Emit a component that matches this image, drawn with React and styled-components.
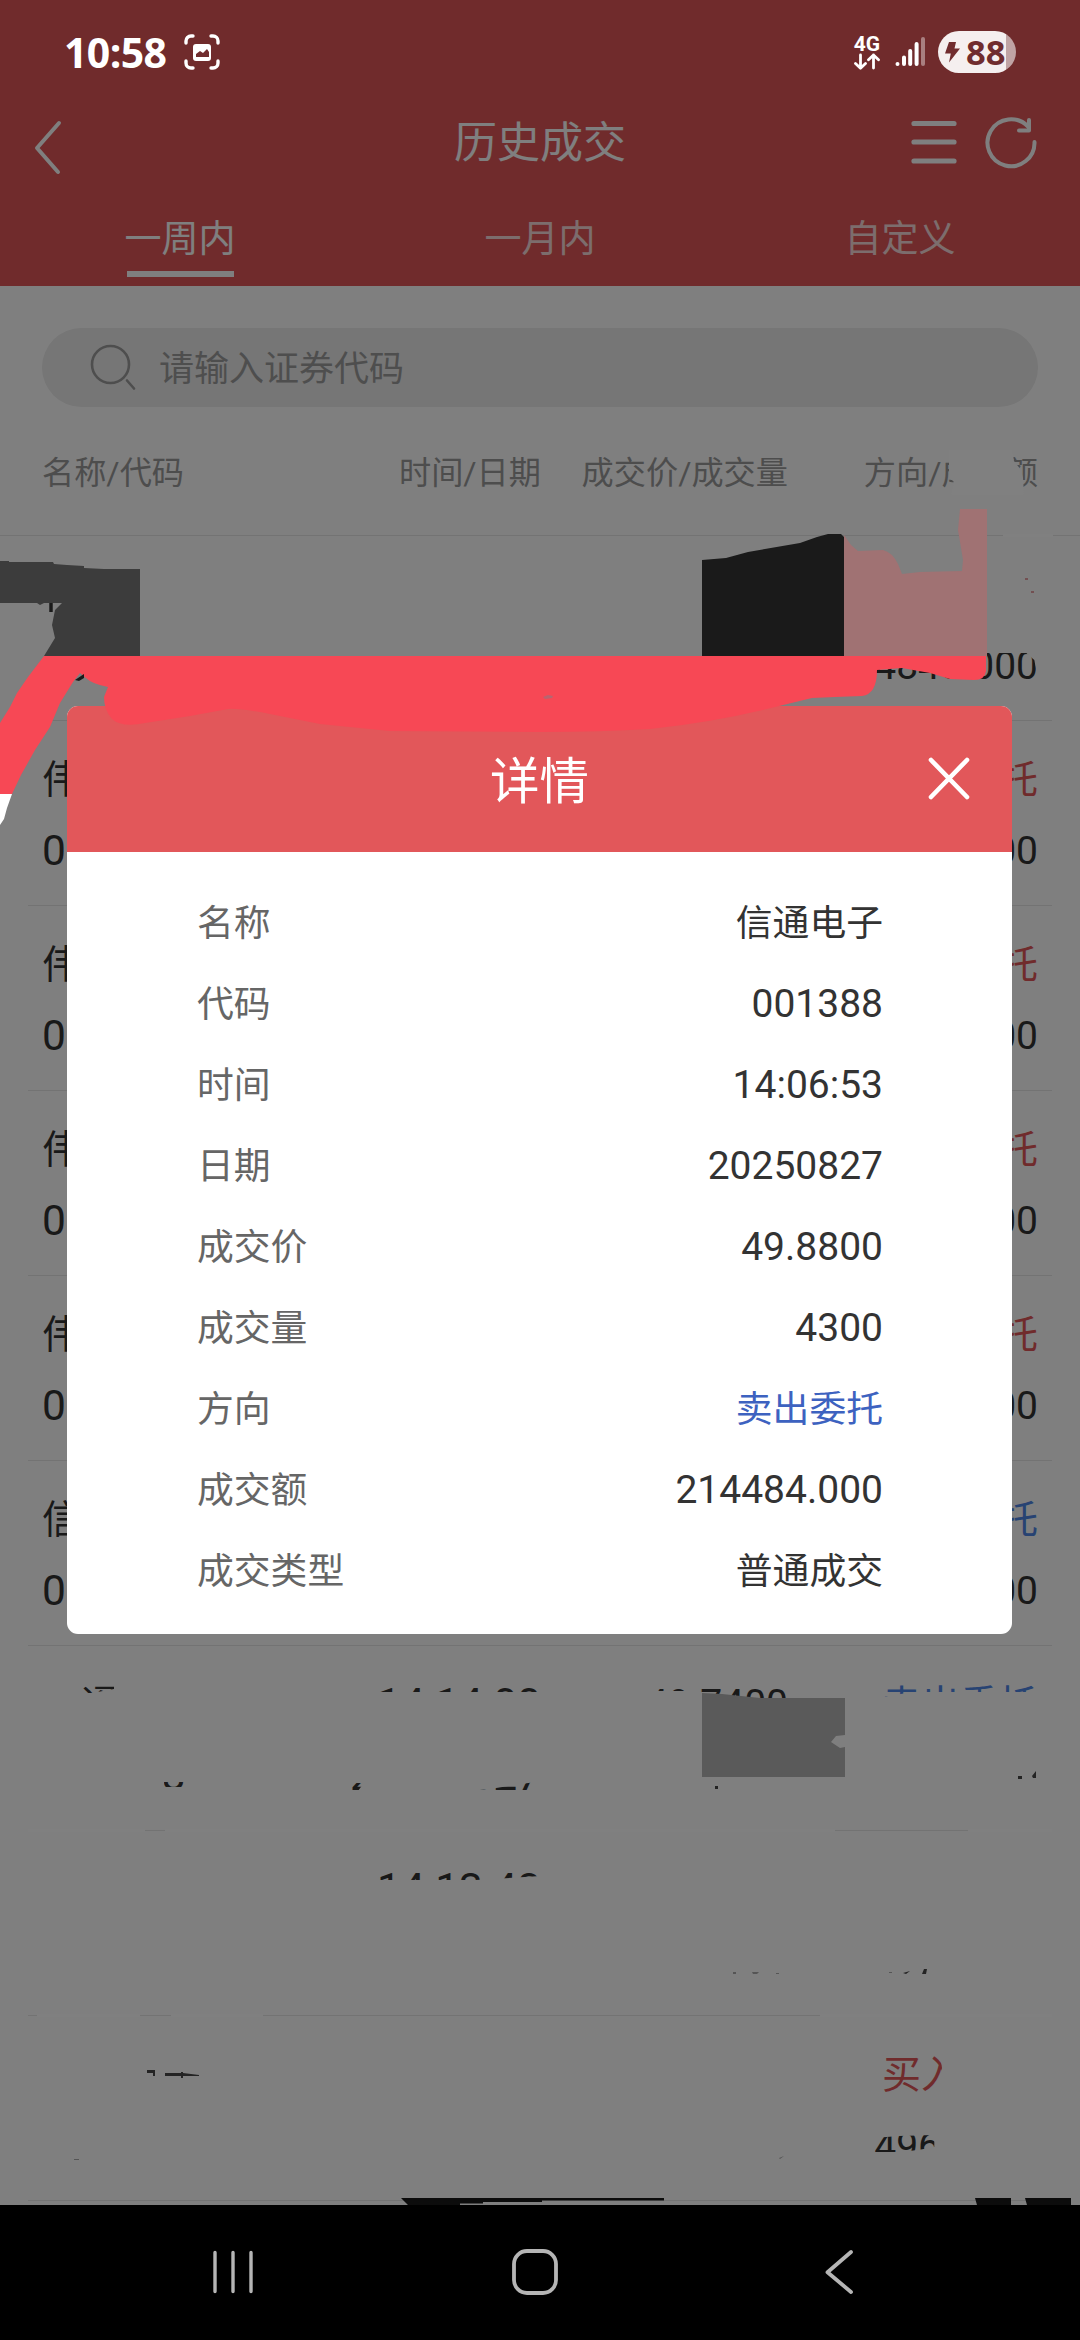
import React from 'react';
import styled, { createGlobalStyle } from 'styled-components';

const GlobalStyle = createGlobalStyle`
  * {
    box-sizing: border-box;
  }

  body {
    margin: 0;
    background: #000000;
    font-family: Roboto, "Noto Sans CJK SC", sans-serif;
  }
`;

const Screen = styled.div`
  position: relative;
  width: 1080px;
  height: 2340px;
  display: flex;
  flex-direction: column;
  overflow: hidden;
`;

const Page = styled.main`
  position: relative;
  height: 2205px;
  background: #FFFFFF;
  overflow: hidden;
`;

const Header = styled.header`
  height: 286px;
  padding-top: 96px;
  background: #E15759;
  color: #FFFFFF;
`;

const TitleBar = styled.div`
  display: grid;
  grid-template-columns: 240px 1fr 240px;
  align-items: center;
  height: 94px;
  padding: 0 34px;

  h1 {
    margin: 0;
    text-align: center;
    font-size: 43px;
    font-weight: 400;
    line-height: 60px;
  }
`;

const BarIcon = styled.svg`
  display: block;
  fill: none;
  stroke: currentColor;
  stroke-linecap: round;
  stroke-linejoin: round;
`;

const BackIcon = styled(BarIcon)`
  margin-top: 8px;
`;

const Actions = styled.div`
  display: flex;
  justify-content: flex-end;
  align-items: center;
  gap: 28px;
  padding-right: 9px;
`;

const Tabs = styled.nav`
  display: grid;
  grid-template-columns: repeat(3, 1fr);
  height: 96px;
`;

const Tab = styled.div`
  display: flex;
  flex-direction: column;
  align-items: center;
  color: ${({ $active }) => ($active ? '#FFFFFF' : 'rgba(255, 255, 255, 0.8)')};
  font-size: 37px;
  line-height: 52px;
  padding-top: 24px;

  &::after {
    content: '';
    width: 107px;
    height: 6px;
    margin-top: 5px;
    background: ${({ $active }) => ($active ? '#FFFFFF' : 'transparent')};
  }
`;

const SearchBox = styled.div`
  display: flex;
  align-items: center;
  height: 79px;
  margin: 42px 42px 0;
  padding-left: 48px;
  gap: 23px;
  border-radius: 40px;
  background: #ECECEC;
  color: #9C9C9C;
  font-size: 35px;
  line-height: 50px;

  span {
    padding-top: 4px;
  }
`;

const Columns = styled.div`
  display: grid;
  grid-template-columns: 250px 249px 247px 250px;
`;

const TableHead = styled(Columns)`
  height: 129px;
  padding: 0 42px;
  border-bottom: 1px solid #E6E6E6;
  color: #9A9A9A;
  font-size: 32.2px;
  line-height: 133px;
  white-space: nowrap;

  span + span {
    text-align: right;
  }
`;

const Row = styled(Columns)`
  height: 185px;
  margin: 0 28px;
  padding: 22px 14px 0;
  border-bottom: 1px solid #E6E6E6;
`;

const Cell = styled.div`
  display: flex;
  flex-direction: column;
  align-items: ${({ $left }) => ($left ? 'flex-start' : 'flex-end')};
  color: #333333;
  font-size: ${({ $big }) => ($big ? 42.5 : 39)}px;
  white-space: nowrap;
`;

const Line = styled.span`
  height: 72px;
  line-height: 72px;
  clip-path: ${({ $clip }) => $clip || 'none'};
`;

const NameLine = styled(Line)`
  line-height: 74px;
  font-size: 39px;
  color: ${({ $tone }) => ({ buy: '#E15759', sell: '#4F86E6' }[$tone] || 'inherit')};
`;

const Shade = styled.div`
  position: absolute;
  inset: 0;
  background: rgba(0, 0, 0, 0.5);
`;

const StatusBar = styled.div`
  position: absolute;
  top: 0;
  left: 0;
  right: 0;
  height: 96px;
  display: flex;
  align-items: center;
  padding: 8px 64px 0 64px;
  color: #FFFFFF;
`;

const Clock = styled.span`
  font: 700 41px/50px "Open Sans", sans-serif;
  letter-spacing: -0.6px;
  width: 120px;
`;

const StatusRight = styled.div`
  display: flex;
  align-items: center;
  margin-left: auto;
`;

const Network = styled.div`
  display: flex;
  flex-direction: column;
  align-items: center;
  width: 26px;
  margin-right: 15px;
  font: 700 21px/18px Roboto, sans-serif;
`;

const Battery = styled.div`
  display: flex;
  align-items: center;
  width: 78px;
  height: 42px;
  margin-left: 13px;
  padding-left: 7px;
  gap: 6px;
  border-radius: 21px;
  background: linear-gradient(to right, #F5EFEF 68px, #C0A3A4 68px);
  color: #702C2E;
  font: 700 34.5px/42px "Open Sans", sans-serif;
`;

const Modal = styled.section`
  position: absolute;
  top: 706px;
  left: 67px;
  width: 945px;
  height: 928px;
  border-radius: 11px;
  background: #FFFFFF;
  overflow: hidden;
`;

const ModalHeader = styled.div`
  display: grid;
  grid-template-columns: 84px 1fr 84px;
  align-items: center;
  height: 146px;
  background: #E2575A;
  color: #FFFFFF;

  h2 {
    margin: 0;
    padding-top: 6px;
    text-align: center;
    font-size: 49.5px;
    font-weight: 400;
    line-height: 70px;
  }
`;

const DetailList = styled.dl`
  margin: 0;
  padding: 31px 129px 0 130px;
`;

const DetailRow = styled.div`
  display: flex;
  justify-content: space-between;
  height: 81px;
  line-height: 81px;
  font-size: 36.8px;

  dt {
    color: #666666;
  }

  dd {
    margin: 0;
    color: ${({ $sell }) => ($sell ? '#3D62C0' : '#333333')};
    font-size: ${({ $number }) => ($number ? 39 : 36.8)}px;
  }
`;

const Scribbles = styled.svg`
  position: absolute;
  top: 0;
  left: 0;
  pointer-events: none;
`;

const NavBar = styled.footer`
  display: flex;
  align-items: center;
  height: 135px;
  padding: 0 0 2px 211px;
  background: #000000;
  color: #B5B5B5;
`;

const NavIcon = styled(BarIcon)`
  margin-right: ${({ $gap }) => $gap || 0}px;
`;

const rows = [
  { amount: '4848.000', amountClip: 'polygon(0 23px, 152px 23px, 160px 30px, 162px 40px, 162px 100%, 0 100%)' },
  { name: '伟', code: '0', side: '委托', tone: 'buy', amount: '000' },
  { name: '伟', code: '0', side: '委托', tone: 'buy', amount: '000' },
  { name: '伟', code: '0', side: '委托', tone: 'buy', amount: '000' },
  { name: '伟', code: '0', side: '委托', tone: 'buy', amount: '000' },
  { name: '信', code: '0', side: '委托', tone: 'sell', amount: '000' },
  {
    name: '信通',
    nameClip: 'polygon(41px 0, 72px 0, 72px 21px, 50px 25px, 41px 25px)',
    code: '001388',
    codeClip: 'polygon(122px 42px, 100% 42px, 100% 47px, 122px 47px)',
    time: '14:14:00',
    timeClip: 'polygon(0 0, 100% 0, 100% 24px, 0 24px)',
    date: '20250827',
    dateClip: 'polygon(0 43px, 14px 43px, 8px 51px, 120px 51px, 140px 49px, 100% 41px, 100% 60px, 0 60px)',
    price: '49.7400',
    priceClip: 'polygon(0 0, 100% 0, 100% 60px, 54px 60px, 54px 23px, 0 23px)',
    side: '卖出委托',
    sideClip: 'polygon(0 0, 100% 0, 100% 24px, 20% 24px, 0 29px)',
    tone: 'sell',
  },
  { time: '14:13:48', timeClip: 'polygon(0 0, 100% 0, 100% 23px, 60% 27px, 0 27px)' },
  {
    side: '买入委托',
    sideClip: 'polygon(0 0, 56px 0, 60px 30px, 56px 50px, 54px 100%, 0 100%)',
    tone: 'buy',
    amount: '4968.000',
    amountClip: 'polygon(0 28px, 24px 26px, 60px 25px, 60px 37px, 44px 40px, 24px 42px, 0 42px)',
  },
];

const details = [
  { label: '名称', value: '信通电子' },
  { label: '代码', value: '001388', number: true },
  { label: '时间', value: '14:06:53', number: true },
  { label: '日期', value: '20250827', number: true },
  { label: '成交价', value: '49.8800', number: true },
  { label: '成交量', value: '4300', number: true },
  { label: '方向', value: '卖出委托', sell: true },
  { label: '成交额', value: '214484.000', number: true },
  { label: '成交类型', value: '普通成交' },
];

const TradeRow = ({ row }) => (
  <Row>
    <Cell $left $big>
      <NameLine $clip={row.nameClip}>{row.name}</NameLine>
      <Line $clip={row.codeClip}>{row.code}</Line>
    </Cell>
    <Cell $big>
      <Line $clip={row.timeClip}>{row.time}</Line>
      <Line $clip={row.dateClip}>{row.date}</Line>
    </Cell>
    <Cell>
      <Line $clip={row.priceClip}>{row.price}</Line>
    </Cell>
    <Cell>
      <NameLine $tone={row.tone} $clip={row.sideClip}>{row.side}</NameLine>
      <Line $clip={row.amountClip}>{row.amount}</Line>
    </Cell>
  </Row>
);

const StatusIcons = () => (
  <StatusBar>
    <Clock>10:58</Clock>
    <BarIcon width="36" height="36" viewBox="0 0 36 36" strokeWidth="3.4">
      <path d="M2 9V7a5 5 0 0 1 5-5h2M27 2h2a5 5 0 0 1 5 5v2M34 27v2a5 5 0 0 1-5 5h-2M9 34H7a5 5 0 0 1-5-5v-2" />
      <rect x="9" y="10" width="18" height="17" rx="3" fill="currentColor" stroke="none" />
      <path d="M12 23v-3l4-3 3 2 4-4 2 3v5z" fill="#702C2E" stroke="none" />
    </BarIcon>
    <StatusRight>
      <Network>
        4G
        <BarIcon width="26" height="17" viewBox="0 0 26 17" strokeWidth="2.8">
          <path d="M6.500 2v13M1.500 10.500l5 4.700 5-4.700M19.500 15V2M14.500 6.700l5-4.700 5 4.700" />
        </BarIcon>
      </Network>
      <BarIcon width="30" height="30" viewBox="0 0 30 30" strokeWidth="4">
        <path d="M2.500 27v.1M9 20.500V27M15.200 14v13M21.600 7v20" />
        <path d="M28 2v25" opacity="0.4" />
      </BarIcon>
      <Battery>
        <svg width="15" height="22" viewBox="0 0 15 22" fill="currentColor">
          <path d="M4 1h7L9.500 7.500H15L4 21.500 5.800 12.500H0z" />
        </svg>
        88
      </Battery>
    </StatusRight>
  </StatusBar>
);

const DetailModal = () => (
  <Modal>
    <ModalHeader>
      <span />
      <h2>详情</h2>
      <BarIcon width="42" height="44" viewBox="0 0 42 44" strokeWidth="4.6">
        <path d="M3 3l36 37M39 3L3 40" />
      </BarIcon>
    </ModalHeader>
    <DetailList>
      {details.map((item) => (
        <DetailRow key={item.label} $sell={item.sell} $number={item.number}>
          <dt>{item.label}</dt>
          <dd>{item.value}</dd>
        </DetailRow>
      ))}
    </DetailList>
  </Modal>
);

// Eraser and marker strokes that lie over the list and the dialog
const Markup = () => (
  <Scribbles width="1080" height="2205" viewBox="0 0 1080 2205">
    <g fill="#808080">
      <path d="M949 450L949 477 954 482 951 495H1024L1023 478 1021 470 1014 461 1012 450Z" />
      <path d="M1003 534h50v3h-50zM28 1829h117v3H28zM165 1829h670v3H165zM968 1829h84v3h-84z" />
      <path d="M37 2014h103v3H37zM171 2014h92v3h-92zM820 2014h232v3H820z" />
    </g>
    <g fill="#242424">
      <path d="M49.500 603h3v9h-3z" />
      <path d="M715 1786h3v3h-3zM1018 1776h4v3h-4zM1032 1776l4-5v7h-3z" />
      <path d="M147 2070h8v6h-2v-3h-6zM165 2073h16v-1h2v1l16 2v1h-16v2h-2v-2h-16z" />
      <path d="M922 1974l2-5h3l-1 5zM903 1973l7-2-4 3z" />
    </g>
    <g fill="#555555">
      <path d="M733 1972h3v2h-3zM752 1972h7l-2 2h-4zM889 1972h3v1h-3zM776 1973h3v1h-3zM779 2158l5-2-4 3zM74 2159h5v1h-5z" />
    </g>
    <path d="M1025 578h3v2h-3zM1031 591h3v2h-3z" fill="#735052" />
    <path d="M0 561h9v1h44l1 2 13 1 17 1v2l20 1h36v87H44l11-18-3-13 3-15 7-7H44l-4 2-3-2H0z" fill="#3C3C3C" />
    <path d="M49.500 603h3v9h-3z" fill="#1A1A1A" />
    <path d="M702 560L726 558 748 552 800 543 817 537 828 534H841L844 537V656H702Z" fill="#1A1A1A" />
    <path d="M844 535l7 10 7 6 25-1q9 2 15 14l4 10 18-2 42-1 1-11-5-30 2-21h27v147H844z" fill="#A07273" />
    <path
      d="M44 656H986V671Q985 680 974 680L950 679 930 673 902 668 877 670Q877 694 862 696L835 697 812 698 775 707Q715 722 650 729Q600 732 540 732L390 731 320 724 270 714Q240 708 228 709L190 716 145 723Q122 728 112 719Q104 710 104 697L108 687Q92 684 86 678L80 673 73 682 60 703 50 727 35 750 21 775 12 794H0V723L5 715 10 707 17 693 28 677Z"
      fill="#F74855"
    />
    <path d="M75 680l9-6v4l-5 3z" fill="#1A1A1A" />
    <path d="M543 697l5-2 5 1-1 2-7 1z" fill="#B76570" />
    <path d="M0 794h12l-5 14-3 11-4 6z" fill="#FFFFFF" />
    <path d="M702 1693l20 1 38 4h85v37l-9 1-5 6 9 6 5-1v30H702z" fill="#5A5A5A" />
    <path d="M401 2198H664V2200.500H542V2202H483V2203.500H460V2205H408Z" fill="#0C0C0C" />
    <path d="M975 2198h36v7h-34zM1025 2198h46v7h-44z" fill="#0C0C0C" />
  </Scribbles>
);

const App = () => {
  return (
    <>
      <GlobalStyle />
      <Screen>
        <Page>
          <Header>
            <TitleBar>
              <BackIcon width="28" height="56" viewBox="0 0 28 56" strokeWidth="4">
                <path d="M25 5L3 30l21 24" transform="translate(0 -1)" />
              </BackIcon>
              <h1>历史成交</h1>
              <Actions>
                <BarIcon width="47" height="52" viewBox="0 0 47 52" strokeWidth="5.200">
                  <path d="M4 6.500h40M4 25h40M4 44h40" />
                </BarIcon>
                <BarIcon width="52" height="52" viewBox="0 0 52 52" strokeWidth="4">
                  <path d="M49.500 25A23.500 23.500 0 1 1 43 9.500" />
                  <path d="M44 3v10.500H34" />
                </BarIcon>
              </Actions>
            </TitleBar>
            <Tabs>
              <Tab $active>一周内</Tab>
              <Tab>一月内</Tab>
              <Tab>自定义</Tab>
            </Tabs>
          </Header>
          <SearchBox>
            <BarIcon width="46" height="48" viewBox="0 0 46 48" strokeWidth="2.600">
              <circle cx="20.500" cy="20.500" r="18.500" />
              <path d="M37 36.500l7 8" />
            </BarIcon>
            <span>请输入证券代码</span>
          </SearchBox>
          <TableHead>
            <span>名称/代码</span>
            <span>时间/日期</span>
            <span>成交价/成交量</span>
            <span>方向/成交额</span>
          </TableHead>
          {rows.map((row, index) => (
            <TradeRow key={index} row={row} />
          ))}
          <Shade />
          <StatusIcons />
          <DetailModal />
          <Markup />
        </Page>
        <NavBar>
          <NavIcon $gap={255} width="44" height="46" viewBox="0 0 44 46" strokeWidth="3.400">
            <path d="M4 3.500v39M22 3.500v39M40 3.500v39" />
          </NavIcon>
          <NavIcon $gap={265} width="50" height="50" viewBox="0 0 50 50" strokeWidth="3.800">
            <rect x="4" y="4" width="42" height="42" rx="13" />
          </NavIcon>
          <NavIcon width="30" height="46" viewBox="0 0 30 46" strokeWidth="3.800">
            <path d="M26 3L2.500 23.200 26 43" />
          </NavIcon>
        </NavBar>
      </Screen>
    </>
  );
};

export default App;
